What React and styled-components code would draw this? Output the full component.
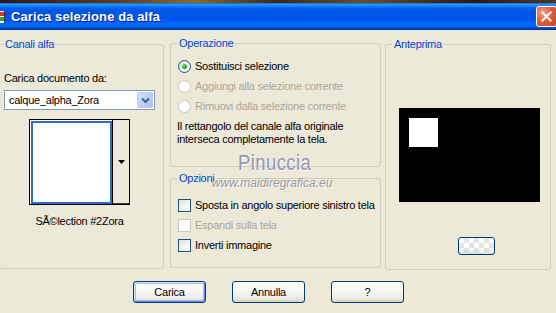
import React from "react";
import styled, { createGlobalStyle, css } from "styled-components";

const Global = createGlobalStyle`
  html, body { margin: 0; padding: 0; background: #ECE9D8; }
  body { font-family: "Liberation Sans", Arial, sans-serif; font-size: 11px; letter-spacing: -0.25px; color: #000; }
`;

const Window = styled.div`
  position: relative;
  width: 556px;
  height: 313px;
  overflow: hidden;
  background: #ECE9D8;
  display: flex;
  flex-direction: column;
`;

const TopStrip = styled.div`
  height: 3px;
  background: linear-gradient(90deg, #2b1d0e 0%, #5a3b16 20%, #8a6a20 35%, #3a2a14 50%, #6b5020 65%, #2a1c0c 85%, #4a3a1a 100%);
`;

const TitleBar = styled.div`
  height: 27px;
  display: flex;
  align-items: center;
  background: linear-gradient(to bottom, #0058EE 0%, #3593FF 4%, #288EFF 8%, #127DFF 12%, #036FFC 16%, #0262EE 20%, #0057E5 26%, #0054E3 32%, #0055EB 56%, #005BF5 66%, #026AFE 76%, #0062EF 86%, #0052D6 92%, #0040AB 96%, #003092 100%);
`;

const TitleIcon = styled.svg`
  flex: none;
  width: 6px;
  height: 16px;
`;

const TitleText = styled.div`
  margin-left: 5px;
  font-family: "Liberation Sans", Arial, sans-serif;
  font-weight: bold;
  font-size: 13px;
  color: #fff;
  text-shadow: 1px 1px 0 #0A1C8C;
  letter-spacing: 0.1px;
`;

const CloseBtn = styled.div`
  margin-left: auto;
  margin-right: -1px;
  width: 21px;
  height: 21px;
  box-sizing: border-box;
  border: 1px solid #fff;
  border-radius: 3px;
  background: radial-gradient(circle at 30% 30%, #F0A28A 0%, #E2603F 45%, #C8401E 100%);
  display: flex;
  align-items: center;
  justify-content: center;
`;

const Main = styled.div`
  display: flex;
  align-items: flex-start;
  padding-top: 8px;
`;

const Group = styled.fieldset`
  margin: 0;
  padding: 0 ${(p) => p.$pr ?? 6}px 0 ${(p) => p.$pl ?? 6}px;
  border: 1px solid #D0D0BF;
  border-radius: 3px;
  box-sizing: border-box;
  min-width: 0;
  width: ${(p) => p.$w}px;
  height: ${(p) => p.$h}px;
  display: flex;
  flex-direction: column;
  align-items: flex-start;
`;

const Legend = styled.legend`
  padding: 0 ${(p) => p.$pad ?? 2}px;
  margin: 0;
  color: #0046D5;
  font-size: 11px;
  line-height: 13px;
`;

const LeftGroup = styled(Group)`
  margin-left: -2px;
  align-items: stretch;
`;

const MidCol = styled.div`
  margin-left: 6px;
  margin-top: -1px;
  display: flex;
  flex-direction: column;
  gap: 5px;
`;

const RightGroup = styled(Group)`
  margin-left: 4px;
`;

const Label = styled.div`
  margin-top: ${(p) => p.$mt ?? 0}px;
  line-height: 13px;
  white-space: nowrap;
  color: ${(p) => (p.$disabled ? "#ACA899" : "#000")};
`;

const Combo = styled.div`
  margin-top: 5px;
  height: 20px;
  box-sizing: border-box;
  border: 1px solid #7F9DB9;
  background: #fff;
  display: flex;
  align-items: center;
  padding: 1px;
`;

const ComboText = styled.div`
  flex: 1;
  padding-left: 3px;
  line-height: 13px;
`;

const ComboArrow = styled.div`
  width: 16px;
  height: 16px;
  box-sizing: border-box;
  border: 1px solid #B9CBF6;
  border-radius: 2px;
  background: linear-gradient(135deg, #D6E2FC 0%, #BFD0F8 50%, #A9BFF3 100%);
  display: flex;
  align-items: center;
  justify-content: center;
`;

const ThumbBox = styled.div`
  margin: 9px auto 0;
  width: 101px;
  height: 86px;
  box-sizing: border-box;
  border: 1px solid #000;
  display: flex;
`;

const ThumbWhite = styled.div`
  width: 82px;
  background: #fff;
  box-sizing: border-box;
  border-left: 1px solid #fff;
  border-top: 1px solid #fff;
  box-shadow: inset 0 0 0 2px #316AC5;
`;

const ThumbSide = styled.div`
  flex: 1;
  border-left: 1px solid #000;
  border-bottom: 1px solid #404040;
  background: #ECE9D8;
  display: flex;
  align-items: center;
  justify-content: center;
`;

const Caption = styled.div`
  margin-top: 10px;
  text-align: center;
  line-height: 13px;
`;

const OptRow = styled.div`
  height: 20px;
  display: flex;
  align-items: center;
  gap: 4px;
  color: ${(p) => (p.$disabled ? "#ACA899" : "#000")};
  white-space: nowrap;
`;

const OptList = styled.div`
  margin-top: ${(p) => p.$mt}px;
  display: flex;
  flex-direction: column;
`;

const Radio = styled.span`
  flex: none;
  width: 13px;
  height: 13px;
  margin-left: 1px;
  box-sizing: border-box;
  border-radius: 50%;
  border: 1px solid ${(p) => (p.$disabled ? "#CAC8BB" : "#1C5180")};
  background: ${(p) =>
    p.$disabled ? "#fff" : "linear-gradient(135deg, #DCDCD7 0%, #F4F4F0 55%, #fff 100%)"};
  display: flex;
  align-items: center;
  justify-content: center;
  ${(p) =>
    p.$checked &&
    css`
      &::after {
        content: "";
        width: 5px;
        height: 5px;
        border-radius: 50%;
        background: radial-gradient(circle at 35% 35%, #7BE37A 0%, #21A121 60%, #0E7A0E 100%);
      }
    `}
`;

const Check = styled.span`
  flex: none;
  width: 13px;
  height: 13px;
  margin-left: 1px;
  box-sizing: border-box;
  border: 1px solid ${(p) => (p.$disabled ? "#CAC8BB" : "#1C5180")};
  background: ${(p) =>
    p.$disabled ? "#fff" : "linear-gradient(135deg, #DCDCD7 0%, #F4F4F0 55%, #fff 100%)"};
`;

const Para = styled.div`
  margin-top: 4px;
  line-height: 13px;
`;

const Preview = styled.div`
  margin-top: 57px;
  margin-left: 7px;
  width: 141px;
  height: 94px;
  background: #000;
  display: flex;
  align-items: flex-start;
  padding: 10px 0 0 10px;
  box-sizing: border-box;
`;

const PreviewSquare = styled.div`
  width: 29px;
  height: 29px;
  background: #fff;
`;

const SwatchBtn = styled.div`
  margin-top: 35px;
  margin-left: 66px;
  width: 37px;
  height: 18px;
  box-sizing: border-box;
  border: 1px solid #003C74;
  border-radius: 3px;
  background:
    linear-gradient(to bottom, rgba(255,255,255,0) 55%, rgba(200,200,195,0.45) 100%),
    repeating-conic-gradient(#E4E4E4 0 25%, #FFFFFF 0 50%) 0 0 / 10px 10px;
`;

const ButtonRow = styled.div`
  margin-top: 11px;
  padding-left: 133px;
  display: flex;
  gap: 26px;
`;

const Button = styled.div`
  width: 73px;
  height: 22px;
  box-sizing: border-box;
  border: 1px solid #003C74;
  border-radius: 3px;
  background: linear-gradient(to bottom, #FFFFFF 0%, #F7F7F4 45%, #ECEBE6 80%, #D6D0C5 100%);
  display: flex;
  align-items: center;
  justify-content: center;
  line-height: 13px;
  ${(p) =>
    p.$default &&
    css`
      box-shadow: inset 1px 1px 0 #CEE7FF, inset -1px -1px 0 #6982EE, inset 0 0 0 2px #A7BDEF;
    `}
`;

const Watermark = styled.div`
  position: absolute;
  left: 205px;
  top: 152px;
  width: 140px;
  display: flex;
  flex-direction: column;
  align-items: center;
  pointer-events: none;
`;

const WmBig = styled.div`
  font-family: "Liberation Sans", Arial, sans-serif;
  font-size: 22px;
  line-height: 22px;
  letter-spacing: 0.5px;
  color: #9597B8;
  text-shadow: 1px 1px 0 rgba(255,255,255,0.8);
  transform: scaleX(0.84);
`;

const WmSmall = styled.div`
  margin-top: 3px;
  font-family: "Liberation Sans", Arial, sans-serif;
  font-style: italic;
  font-size: 12px;
  line-height: 12px;
  letter-spacing: 0;
  color: #9A9AA2;
  text-shadow: 1px 1px 0 rgba(255,255,255,0.7);
  transform: translateX(-3px);
`;

export default function App() {
  return (
    <>
      <Global />
      <Window>
        <TopStrip />
        <TitleBar>
          <TitleIcon viewBox="0 0 6 16">
            <rect x="0" y="2" width="5" height="12" fill="#fff" />
            <rect x="0" y="3" width="4" height="4" fill="#D23A2A" />
            <rect x="0" y="8" width="4" height="4" fill="#3AA14A" />
            <rect x="4" y="2" width="1" height="12" fill="#2a2a2a" />
          </TitleIcon>
          <TitleText>Carica selezione da alfa</TitleText>
          <CloseBtn>
            <svg width="11" height="11" viewBox="0 0 11 11">
              <path d="M1.5 1.5 L9.5 9.5 M9.5 1.5 L1.5 9.5" stroke="#fff" strokeWidth="2" strokeLinecap="square" />
            </svg>
          </CloseBtn>
        </TitleBar>

        <Main>
          <LeftGroup $w={166} $h={231} $pl={5} $pr={8}>
            <Legend $pad={1}>Canali alfa</Legend>
            <Label $mt={21}>Carica documento da:</Label>
            <Combo>
              <ComboText>calque_alpha_Zora</ComboText>
              <ComboArrow>
                <svg width="9" height="7" viewBox="0 0 9 7">
                  <path d="M1 1.5 L4.5 5 L8 1.5" stroke="#4D6185" strokeWidth="2" fill="none" />
                </svg>
              </ComboArrow>
            </Combo>
            <ThumbBox>
              <ThumbWhite />
              <ThumbSide>
                <svg width="7" height="4" viewBox="0 0 7 4">
                  <path d="M0 0 H7 L3.5 4 Z" fill="#000" />
                </svg>
              </ThumbSide>
            </ThumbBox>
            <Caption>SÃ©lection #2Zora</Caption>
          </LeftGroup>

          <MidCol>
            <Group $w={211} $h={130}>
              <Legend>Operazione</Legend>
              <OptList $mt={6}>
                <OptRow>
                  <Radio $checked />
                  Sostituisci selezione
                </OptRow>
                <OptRow $disabled>
                  <Radio $disabled />
                  Aggiungi alla selezione corrente
                </OptRow>
                <OptRow $disabled>
                  <Radio $disabled />
                  Rimuovi dalla selezione corrente
                </OptRow>
              </OptList>
              <Para>
                Il rettangolo del canale alfa originale
                <br />
                interseca completamente la tela.
              </Para>
            </Group>
            <Group $w={211} $h={96}>
              <Legend>Opzioni</Legend>
              <OptList $mt={10}>
                <OptRow>
                  <Check />
                  Sposta in angolo superiore sinistro tela
                </OptRow>
                <OptRow $disabled>
                  <Check $disabled />
                  Espandi sulla tela
                </OptRow>
                <OptRow>
                  <Check />
                  Inverti immagine
                </OptRow>
              </OptList>
            </Group>
          </MidCol>

          <RightGroup $w={166} $h={232}>
            <Legend>Anteprima</Legend>
            <Preview>
              <PreviewSquare />
            </Preview>
            <SwatchBtn />
          </RightGroup>
        </Main>

        <ButtonRow>
          <Button $default>Carica</Button>
          <Button>Annulla</Button>
          <Button>?</Button>
        </ButtonRow>

        <Watermark>
          <WmBig>Pinuccia</WmBig>
          <WmSmall>www.maidiregrafica.eu</WmSmall>
        </Watermark>
      </Window>
    </>
  );
}
